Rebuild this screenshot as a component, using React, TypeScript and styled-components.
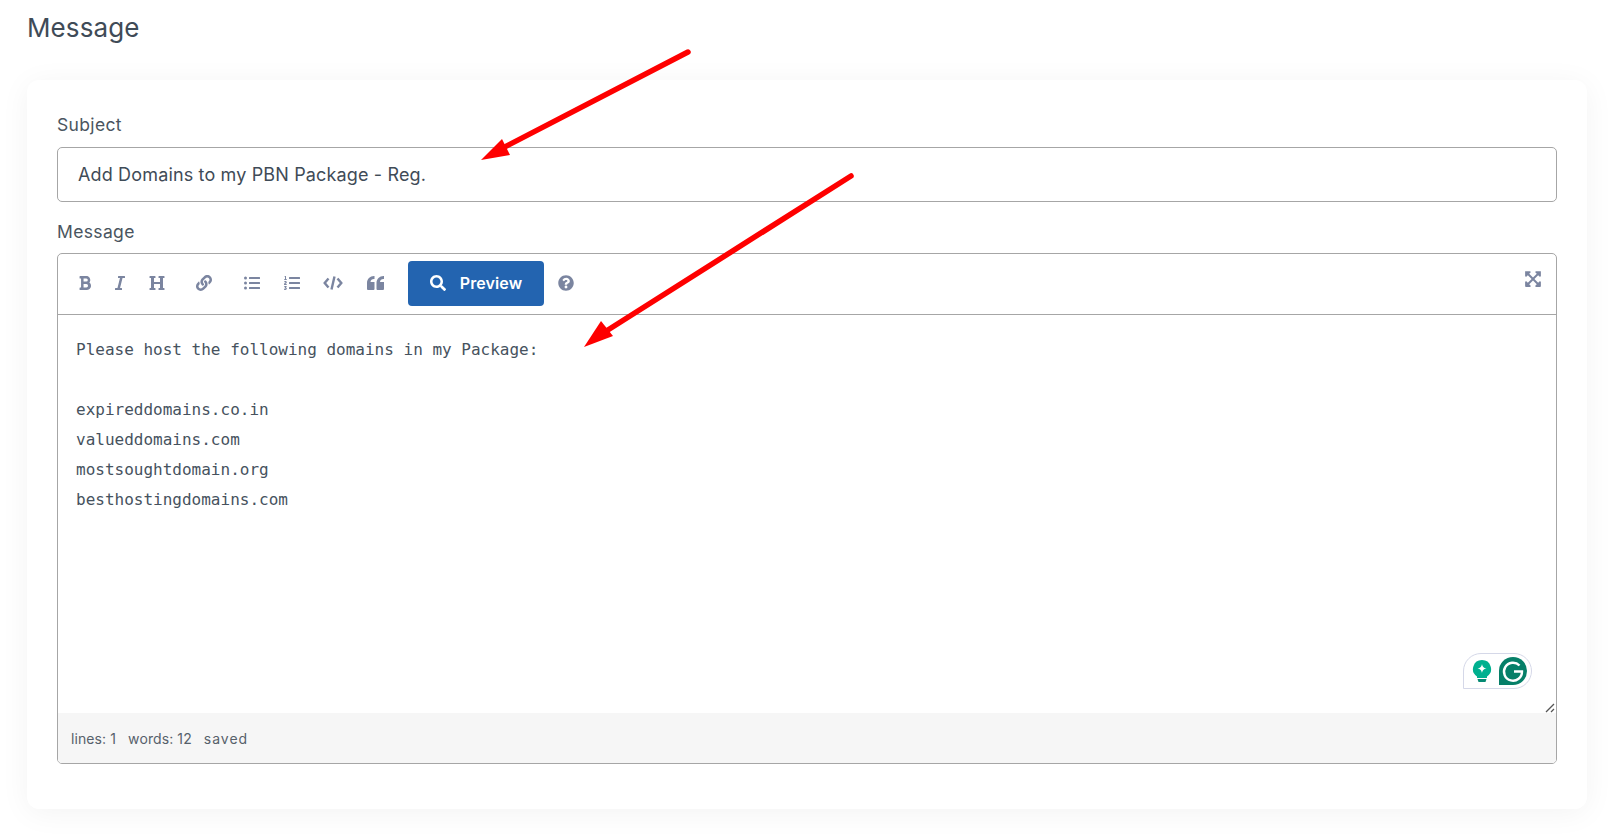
import React from 'react';
import styled, { createGlobalStyle } from 'styled-components';
import {
  FaBold,
  FaExpandArrowsAlt,
  FaHeading,
  FaItalic,
  FaLink,
  FaListOl,
  FaListUl,
  FaQuestionCircle,
  FaSearch,
} from 'react-icons/fa';

const GlobalStyle = createGlobalStyle`
  html, body {
    margin: 0;
    background: #fff;
    color: #3f4b57;
    font-family: Inter, "Open Sans", sans-serif;
  }
`;

const Page = styled.div`
  position: relative;
  width: 1610px;
  height: 835px;
  box-sizing: border-box;
  padding: 0 23px 0 27px;
  overflow: hidden;
`;

const Title = styled.h1`
  margin: 0 0 24px;
  height: 56px;
  font-size: 26px;
  font-weight: 400;
  letter-spacing: 0.1px;
  line-height: 56px;
  color: #3f4b57;
`;

const Card = styled.div`
  height: 729px;
  box-sizing: border-box;
  padding: 30px 30px 45px;
  display: flex;
  flex-direction: column;
  background: #fff;
  border-radius: 12px;
  box-shadow: 0 4px 30px rgba(0, 0, 0, 0.05);
`;

const Label = styled.label<{ $after: number }>`
  display: block;
  margin-bottom: ${({ $after }) => $after}px;
  font-size: 17.5px;
  letter-spacing: 0.35px;
  line-height: 30px;
  color: #4a5560;
`;

const SubjectBox = styled.div`
  height: 55px;
  box-sizing: border-box;
  margin-bottom: 15px;
  padding: 0 20px 1px;
  display: flex;
  align-items: center;
  border: 1px solid #a6a6a6;
  border-radius: 5px;
  font-size: 18px;
  letter-spacing: 0.15px;
  color: #3f4b57;
`;

const Editor = styled.div`
  flex: 1;
  display: flex;
  flex-direction: column;
  border: 1px solid #a6a6a6;
  border-radius: 5px;
  overflow: hidden;
`;

const Toolbar = styled.div`
  height: 61px;
  flex: none;
  box-sizing: border-box;
  padding: 0 8px 1px 12px;
  display: flex;
  align-items: center;
  border-bottom: 1px solid #a6a6a6;
`;

const ToolButton = styled.span<{ $gap?: number; $size?: number }>`
  width: 30px;
  height: 30px;
  flex: none;
  box-sizing: border-box;
  padding-bottom: 1px;
  margin-left: ${({ $gap }) => $gap ?? 0}px;
  display: flex;
  align-items: center;
  justify-content: center;
  color: #7b85a0;
  font-size: ${({ $size }) => $size ?? 16}px;
`;

const FullscreenButton = styled(ToolButton)`
  margin-left: auto;
  margin-bottom: 9px;
`;

const PreviewButton = styled.button`
  width: 136px;
  height: 45px;
  flex: none;
  margin-left: 18px;
  padding: 0 0 2px;
  display: flex;
  align-items: center;
  justify-content: center;
  gap: 14px;
  border: 0;
  border-radius: 4px;
  background: #2364b0;
  color: #fff;
  font-family: inherit;
  font-size: 16px;
  font-weight: 600;
  letter-spacing: 0.1px;
`;

const Body = styled.div`
  position: relative;
  flex: 1;
  padding: 20px 18px 0;
  font-family: "DejaVu Sans Mono", "Liberation Mono", monospace;
  font-size: 16px;
  line-height: 30px;
  color: #46525e;
`;

const Line = styled.div`
  height: 30px;
  white-space: pre;
`;

const GrammarlyBadge = styled.div`
  position: absolute;
  right: 24px;
  bottom: 24px;
  width: 69px;
  height: 36px;
  box-sizing: border-box;
  padding: 0 4px 0 8px;
  display: flex;
  align-items: center;
  justify-content: space-between;
  border: 1px solid #d5d8e8;
  border-radius: 18px 18px 18px 0;
  background: #fff;
`;

const ResizeGrip = styled.svg`
  position: absolute;
  right: 0;
  bottom: 0;
`;

const StatusBar = styled.div`
  height: 50px;
  flex: none;
  padding-left: 13px;
  display: flex;
  align-items: center;
  gap: 12px;
  background: #f6f6f6;
  font-size: 14px;
  letter-spacing: 0.1px;
  color: #56616b;
`;

const SavedState = styled.span`
  letter-spacing: 1px;
`;

const Arrows = styled.svg`
  position: absolute;
  left: 0;
  top: 0;
  pointer-events: none;
`;

const CodeIcon = () => (
  <svg width="20" height="16" viewBox="0 0 20 16" fill="none" stroke="currentColor" strokeWidth="2.400">
    <path d="M5.500 3.500L1.700 8l3.800 4.500M14.500 3.500l3.800 4.500-3.800 4.500M11.500 1.500L8.500 14.500" />
  </svg>
);

const QuoteIcon = () => (
  <svg width="17" height="14" viewBox="0 0 17 14" fill="currentColor">
    <path d="M0 13V7C0 3 3 0 7 0H7.500V3H7C5 3 3.500 4.300 3.500 6H7.500V13a1 1 0 0 1-1 1H1a1 1 0 0 1-1-1z" />
    <path d="M9.500 13V7C9.500 3 12.500 0 16.500 0H17V3H16.500C14.500 3 13 4.300 13 6H17V13a1 1 0 0 1-1 1H10.500a1 1 0 0 1-1-1z" />
  </svg>
);

const lines = [
  'Please host the following domains in my Package:',
  '',
  'expireddomains.co.in',
  'valueddomains.com',
  'mostsoughtdomain.org',
  'besthostingdomains.com',
];

const App = () => (
  <Page>
    <GlobalStyle />
    <Title>Message</Title>
    <Card>
      <Label $after={7}>Subject</Label>
      <SubjectBox>Add Domains to my PBN Package - Reg.</SubjectBox>
      <Label $after={6}>Message</Label>
      <Editor>
        <Toolbar>
          <ToolButton><FaBold /></ToolButton>
          <ToolButton $gap={5}><FaItalic /></ToolButton>
          <ToolButton $gap={7}><FaHeading /></ToolButton>
          <ToolButton $gap={17}><FaLink /></ToolButton>
          <ToolButton $gap={18}><FaListUl /></ToolButton>
          <ToolButton $gap={10}><FaListOl /></ToolButton>
          <ToolButton $gap={11}><CodeIcon /></ToolButton>
          <ToolButton $gap={12}><QuoteIcon /></ToolButton>
          <PreviewButton><FaSearch />Preview</PreviewButton>
          <ToolButton $gap={7}><FaQuestionCircle /></ToolButton>
          <FullscreenButton $size={18}><FaExpandArrowsAlt /></FullscreenButton>
        </Toolbar>
        <Body>
          {lines.map((line, i) => (
            <Line key={i}>{line}</Line>
          ))}
          <GrammarlyBadge>
            <svg width="20" height="24" viewBox="0 0 20 24">
              <path d="M10 1a9 9 0 0 0-5 16.500V19h10v-1.500A9 9 0 0 0 10 1z" fill="#00b08f" />
              <path d="M10 5c.6 3 1.400 3.800 4.500 4.500-3.100.7-3.900 1.500-4.500 4.500-.6-3-1.400-3.800-4.500-4.500C8.600 8.800 9.400 8 10 5z" fill="#fff" />
              <path d="M5.500 20h9l-1 3h-7z" fill="#058a73" />
            </svg>
            <svg width="28" height="28" viewBox="0 0 28 28">
              <path d="M14 0a14 14 0 0 1 0 28H0V14A14 14 0 0 1 14 0z" fill="#067f68" />
              <path d="M20.500 8.500A9 9 0 1 0 23 14.500h-8" fill="none" stroke="#fff" strokeWidth="2.400" />
            </svg>
          </GrammarlyBadge>
          <ResizeGrip width="12" height="12" viewBox="0 0 12 12">
            <path d="M2 11l8-8M7 11l3-3" stroke="#555" strokeWidth="1.300" fill="none" />
          </ResizeGrip>
        </Body>
        <StatusBar>
          <span>lines: 1</span>
          <span>words: 12</span>
          <SavedState>saved</SavedState>
        </StatusBar>
      </Editor>
    </Card>
    <Arrows width="1610" height="835" viewBox="0 0 1610 835">
      <path d="M688 52L495 152" stroke="#fe0000" strokeWidth="5.500" strokeLinecap="round" />
      <path d="M481 160L502 139L510 155z" fill="#fe0000" />
      <path d="M851 176L600 335" stroke="#fe0000" strokeWidth="5.500" strokeLinecap="round" />
      <path d="M584 347L601 321L613 336z" fill="#fe0000" />
    </Arrows>
  </Page>
);

export default App;
